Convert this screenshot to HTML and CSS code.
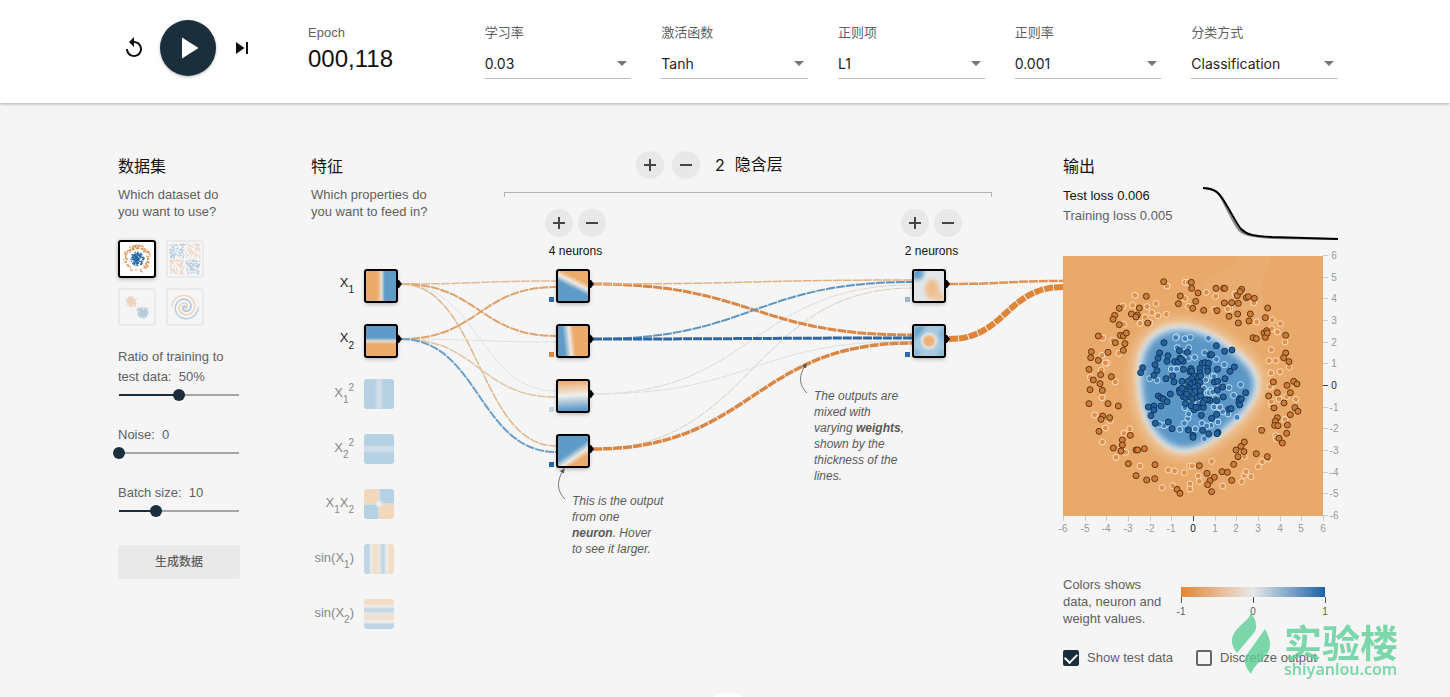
FILE: index.html
```
<!DOCTYPE html>
<html lang="zh-CN">
<head>
<meta charset="utf-8">
<title>Neural network playground</title>
<link rel="stylesheet" href="styles.css">
</head>
<body>
<header class="top">
  <div class="playback">
    <button class="icon-btn" aria-label="Reset"><svg width="24" height="24" viewBox="0 0 24 24"><path d="M12 5V1L7 6l5 5V7c3.31 0 6 2.69 6 6s-2.690 6-6 6-6-2.690-6-6H4c0 4.420 3.580 8 8 8s8-3.580 8-8-3.580-8-8-8z"/></svg></button>
    <button class="play" aria-label="Run"><svg width="36" height="36" viewBox="0 0 24 24"><path d="M8 5v14l11-7z"/></svg></button>
    <button class="icon-btn" aria-label="Step"><svg width="24" height="24" viewBox="0 0 24 24"><path d="M6 18l8.500-6L6 6v12zM16 6v12h2V6h-2z"/></svg></button>
  </div>
  <div class="field"><span class="label">Epoch</span><span class="epoch">000,118</span></div>
  <div class="field"><label class="label" for="rate">学习率</label><div class="select"><select id="rate"><option>0.03</option></select></div></div>
  <div class="field"><label class="label" for="act">激活函数</label><div class="select"><select id="act"><option>Tanh</option></select></div></div>
  <div class="field"><label class="label" for="reg">正则项</label><div class="select"><select id="reg"><option>L1</option></select></div></div>
  <div class="field"><label class="label" for="regrate">正则率</label><div class="select"><select id="regrate"><option>0.001</option></select></div></div>
  <div class="field"><label class="label" for="problem">分类方式</label><div class="select"><select id="problem"><option>Classification</option></select></div></div>
</header>

<main class="main">
  <section class="data">
    <h2>数据集</h2>
    <p class="lead">Which dataset do you want to use?</p>
    <div class="thumbs">
      <button class="thumb selected" aria-label="Circle"><svg viewBox="0 0 34 34" data-set="circle"></svg></button>
      <button class="thumb" aria-label="Exclusive or"><svg viewBox="0 0 34 34" data-set="xor"></svg></button>
      <button class="thumb" aria-label="Gaussian"><svg viewBox="0 0 34 34" data-set="gauss"></svg></button>
      <button class="thumb" aria-label="Spiral"><svg viewBox="0 0 34 34" data-set="spiral"></svg></button>
    </div>
    <div class="slider"><label for="ratio">Ratio of training to test data:&nbsp; 50%</label><input id="ratio" type="range" min="0" max="100" value="50" style="--v:.5"></div>
    <div class="slider"><label for="noise">Noise:&nbsp; 0</label><input id="noise" type="range" min="0" max="50" value="0" style="--v:0"></div>
    <div class="slider"><label for="batch">Batch size:&nbsp; 10</label><input id="batch" type="range" min="1" max="30" value="10" style="--v:.31"></div>
    <button class="regen">生成数据</button>
  </section>

  <section class="network">
    <div class="net-head">
      <div class="features">
        <h2>特征</h2>
        <p class="lead">Which properties do you want to feed in?</p>
      </div>
      <div class="layers">
        <div class="layer-count">
          <button class="round" aria-label="Add layer"><svg viewBox="0 0 28 28"><path d="M8 14h12M14 8v12"/></svg></button>
          <button class="round" aria-label="Remove layer"><svg viewBox="0 0 28 28"><path d="M8 14h12"/></svg></button>
          <span class="count">2</span><span>隐含层</span>
        </div>
        <div class="bracket"></div>
        <div class="columns">
          <div class="column">
            <div class="pair">
              <button class="round" aria-label="Add neuron"><svg viewBox="0 0 28 28"><path d="M8 14h12M14 8v12"/></svg></button>
              <button class="round" aria-label="Remove neuron"><svg viewBox="0 0 28 28"><path d="M8 14h12"/></svg></button>
            </div>
            <span>4 neurons</span>
          </div>
          <div class="column">
            <div class="pair">
              <button class="round" aria-label="Add neuron"><svg viewBox="0 0 28 28"><path d="M8 14h12M14 8v12"/></svg></button>
              <button class="round" aria-label="Remove neuron"><svg viewBox="0 0 28 28"><path d="M8 14h12"/></svg></button>
            </div>
            <span>2 neurons</span>
          </div>
        </div>
      </div>
    </div>
    <svg class="diagram" viewBox="311 262 752 380">
      <defs>
        <linearGradient id="gx1"><stop offset=".38" stop-color="#ecaa6b"/><stop offset=".52" stop-color="#e4ddd3"/><stop offset=".62" stop-color="#5f9bc8"/></linearGradient>
        <linearGradient id="gx2" x2="0" y2="1"><stop offset=".4" stop-color="#5f9bc8"/><stop offset=".5" stop-color="#e4ddd3"/><stop offset=".6" stop-color="#ecaa6b"/></linearGradient>
        <linearGradient id="gn1" x1=".7" y1="0" x2=".3" y2=".8"><stop offset=".3" stop-color="#ecaa6b"/><stop offset=".48" stop-color="#eee9e2"/><stop offset=".68" stop-color="#5f9bc8"/></linearGradient>
        <linearGradient id="gn2" x1="0" y1=".1" x2="1" y2="0"><stop offset=".16" stop-color="#5f9bc8"/><stop offset=".36" stop-color="#eee9e2"/><stop offset=".5" stop-color="#ecaa6b"/></linearGradient>
        <linearGradient id="gn3" x2=".05" y2="1"><stop offset=".05" stop-color="#ecaa6b"/><stop offset=".5" stop-color="#f0eeea"/><stop offset=".95" stop-color="#5f9bc8"/></linearGradient>
        <linearGradient id="gn4" x1=".25" y1=".2" x2=".8" y2="1"><stop offset=".38" stop-color="#5f9bc8"/><stop offset=".6" stop-color="#eee9e2"/><stop offset=".76" stop-color="#ecaa6b"/></linearGradient>
        <linearGradient id="sq1"><stop offset=".35" stop-color="#b6d0e4"/><stop offset=".45" stop-color="#d0e0ea"/><stop offset=".55" stop-color="#d0e0ea"/><stop offset=".65" stop-color="#b6d0e4"/></linearGradient>
        <linearGradient id="sq2" x2="0" y2="1"><stop offset=".35" stop-color="#b6d0e4"/><stop offset=".45" stop-color="#d0e0ea"/><stop offset=".55" stop-color="#d0e0ea"/><stop offset=".65" stop-color="#b6d0e4"/></linearGradient>
        <linearGradient id="sin1"><stop offset=".15" stop-color="#bfd5e5"/><stop offset=".24" stop-color="#eeeeec"/><stop offset=".33" stop-color="#f3dcc4"/><stop offset=".43" stop-color="#f3dfca"/><stop offset=".5" stop-color="#e8e8e6"/><stop offset=".64" stop-color="#bcd3e5"/><stop offset=".76" stop-color="#eeeeec"/><stop offset=".85" stop-color="#f3dcc4"/></linearGradient>
        <linearGradient id="sin2" x2="0" y2="1"><stop offset=".15" stop-color="#f3dcc4"/><stop offset=".24" stop-color="#eeeeec"/><stop offset=".36" stop-color="#bcd3e5"/><stop offset=".5" stop-color="#e8e8e6"/><stop offset=".62" stop-color="#f3dcc4"/><stop offset=".76" stop-color="#eeeeec"/><stop offset=".85" stop-color="#bfd5e5"/></linearGradient>
        <filter id="soft" x="-50%" y="-50%" width="200%" height="200%"><feGaussianBlur stdDeviation="2"/></filter>
        <filter id="soft1"><feGaussianBlur stdDeviation="1"/></filter>
        <clipPath id="c30"><rect x="-15" y="-15" width="30" height="30" rx="3"/></clipPath>
        <marker id="tip" viewBox="0 0 10 10" refX="8" refY="5" markerWidth="5" markerHeight="5" markerUnits="userSpaceOnUse" orient="auto"><path d="M0 0L10 5L0 10z" fill="#555"/></marker>
      </defs>

      <g class="links">
        <path d="M401 284C479 284 479 391 556 391" stroke="#dfe1e5"/>
        <path d="M401 339C479 339 479 342 556 342" stroke="#dedede"/>
        <path d="M401 284C479 284 479 281 556 281" stroke="#dfbb98" stroke-width="1.500"/>
        <path d="M401 284C479 284 479 336 556 336" stroke="#dfa26c" stroke-width="2"/>
        <path d="M401 284C479 284 479 446 556 446" stroke="#e0b68c" stroke-width="1.500"/>
        <path d="M401 339C479 339 479 287 556 287" stroke="#dfa26c" stroke-width="2"/>
        <path d="M401 339C479 339 479 397 556 397" stroke="#e0c3a4" stroke-width="1.500"/>
        <path d="M401 339C479 339 479 452 556 452" stroke="#6a9fc8" stroke-width="2"/>
        <path d="M593 394C753 394 753 285 912 285" stroke="#e0d8d1"/>
        <path d="M593 394C753 394 753 341 912 341" stroke="#dadfe4"/>
        <path d="M593 449C753 449 753 288 912 288" stroke="#ddcdbf" stroke-width="1"/>
        <path d="M593 284C753 284 753 335 912 335" stroke="#d98746" stroke-width="3"/>
        <path d="M593 284C753 284 753 280 912 280" stroke="#e0b385" stroke-width="1.500"/>
        <path d="M593 339C753 339 753 282 912 282" stroke="#5e94bf" stroke-width="2"/>
        <path d="M593 339C753 339 753 338 912 338" stroke="#2f67a2" stroke-width="3"/>
        <path d="M593 449C753 449 753 343 912 343" stroke="#d98746" stroke-width="3.500"/>
        <path d="M949 284C1006 284 1006 281 1063 281" stroke="#dc9353" stroke-width="2.500"/>
        <path d="M949 339C1006 339 1006 287 1063 287" stroke="#e08438" stroke-width="6"/>
      </g>

      <g class="off">
        <rect x="364" y="379" width="30" height="30" rx="3" fill="url(#sq1)"/>
        <rect x="364" y="434" width="30" height="30" rx="3" fill="url(#sq2)"/>
        <g transform="translate(379 504)"><g clip-path="url(#c30)"><path d="M-15-15H0V0H-15z" fill="#f3d7ba"/><path d="M0-15H15V0H0z" fill="#b6d0e4"/><path d="M-15 0H0V15H-15z" fill="#b6d0e4"/><path d="M0 0H15V15H0z" fill="#f3d7ba"/><path d="M0-15V15M-15 0H15" stroke="#e0e0de" stroke-width="1.500"/><circle r="3" fill="#edf0f0" filter="url(#soft1)"/></g></g>
        <rect x="364" y="544" width="30" height="30" rx="3" fill="url(#sin1)"/>
        <rect x="364" y="599" width="30" height="30" rx="3" fill="url(#sin2)"/>
      </g>

      <g class="nodes">
        <rect x="365" y="270" width="32" height="32" rx="2" fill="url(#gx1)"/>
        <rect x="365" y="325" width="32" height="32" rx="2" fill="url(#gx2)"/>
        <rect x="557" y="270" width="32" height="32" rx="2" fill="url(#gn1)"/>
        <rect x="557" y="325" width="32" height="32" rx="2" fill="url(#gn2)"/>
        <rect x="557" y="380" width="32" height="32" rx="2" fill="url(#gn3)"/>
        <rect x="557" y="435" width="32" height="32" rx="2" fill="url(#gn4)"/>
        <rect x="913" y="270" width="32" height="32" rx="2" fill="#e3e7ea"/>
        <rect x="913" y="325" width="32" height="32" rx="2" fill="#a9cae0"/>
      </g>
      <g transform="translate(929 286)"><g clip-path="url(#c30)"><circle cx="-12" cy="-13" r="7" fill="#5f9bc8" filter="url(#soft)"/><ellipse cx="3" cy="3" rx="7" ry="10" fill="#efbd8c" filter="url(#soft)"/><path d="M2 4L15 8V15H6z" fill="#efc59b" filter="url(#soft)"/></g></g>
      <g transform="translate(929 341)"><g clip-path="url(#c30)"><path d="M-15-15H-3L-15 0zM15-15V4L11-8z" fill="#5f9bc8" filter="url(#soft)"/><path d="M8 15L15 7V15zM-15 15V6L-8 15z" fill="#6fa5cd" filter="url(#soft)"/><circle r="8" fill="#eef0f0" filter="url(#soft1)"/><circle r="6" fill="#edb077" filter="url(#soft1)"/></g></g>
      <g class="frames">
        <rect x="365" y="270" width="32" height="32" rx="2"/><rect x="365" y="325" width="32" height="32" rx="2"/>
        <rect x="557" y="270" width="32" height="32" rx="2"/><rect x="557" y="325" width="32" height="32" rx="2"/><rect x="557" y="380" width="32" height="32" rx="2"/><rect x="557" y="435" width="32" height="32" rx="2"/>
        <rect x="913" y="270" width="32" height="32" rx="2"/><rect x="913" y="325" width="32" height="32" rx="2"/>
      </g>
      <path class="ports" d="M398 280h1l3 4-3 4h-1zM398 335h1l3 4-3 4h-1zM590 280h1l3 4-3 4h-1zM590 335h1l3 4-3 4h-1zM590 390h1l3 4-3 4h-1zM590 445h1l3 4-3 4h-1zM946 280h1l3 4-3 4h-1zM946 335h1l3 4-3 4h-1z"/>
      <g class="biases">
        <rect x="549" y="297" width="5" height="5" fill="#2f6ba6"/><rect x="549" y="352" width="5" height="5" fill="#db8746"/><rect x="549" y="407" width="5" height="5" fill="#c8d5de"/><rect x="549" y="462" width="5" height="5" fill="#2465a5"/>
        <rect x="905" y="297" width="5" height="5" fill="#9ab7cf"/><rect x="905" y="352" width="5" height="5" fill="#2f6ba6"/>
      </g>

      <g class="names">
        <text class="on" x="354" y="287">X<tspan class="small" dy="6">1</tspan></text>
        <text class="on" x="354" y="342">X<tspan class="small" dy="7">2</tspan></text>
        <text x="354" y="397">X<tspan class="small" dy="6">1</tspan><tspan class="small" dy="-12">2</tspan></text>
        <text x="354" y="452">X<tspan class="small" dy="6">2</tspan><tspan class="small" dy="-12">2</tspan></text>
        <text x="354" y="507">X<tspan class="small" dy="6">1</tspan><tspan dy="-6">X</tspan><tspan class="small" dy="6">2</tspan></text>
        <text x="354" y="562">sin(X<tspan class="small" dy="6">1</tspan><tspan dy="-6">)</tspan></text>
        <text x="354" y="617">sin(X<tspan class="small" dy="6">2</tspan><tspan dy="-6">)</tspan></text>
      </g>
      <g class="notes">
        <path d="M565 499C556 490 557 480 564 469" marker-end="url(#tip)"/>
        <path d="M807 393C798 384 799 375 806 364" marker-end="url(#tip)"/>
        <text><tspan x="572" y="505">This is the output</tspan><tspan x="572" y="521">from one</tspan><tspan x="572" y="537" class="strong">neuron</tspan>. Hover<tspan x="572" y="553">to see it larger.</tspan></text>
        <text><tspan x="814" y="400">The outputs are</tspan><tspan x="814" y="416">mixed with</tspan><tspan x="814" y="432">varying </tspan><tspan class="strong">weights</tspan>,<tspan x="814" y="448">shown by the</tspan><tspan x="814" y="464">thickness of the</tspan><tspan x="814" y="480">lines.</tspan></text>
      </g>
    </svg>
  </section>

  <section class="output">
    <h2>输出</h2>
    <div class="stats">
      <div class="losses"><span class="test">Test loss 0.006</span><span>Training loss 0.005</span></div>
      <svg class="losschart" width="136" height="60" viewBox="0 0 136 60"><path class="train" d="M1 7C14 7 17 12 22 22C29 36 33 44 37 49C43 55 54 56 70 57L136 58"/><path d="M1 7C14 8 17 12 22 20C32 36 34 42 39 48C45 54 52 55 70 56L136 58"/></svg>
    </div>
    <svg class="heatmap" viewBox="1063 250 275 290">
      <defs>
        <filter id="b1" x="-20%" y="-20%" width="140%" height="140%"><feGaussianBlur stdDeviation="18"/></filter>
        <filter id="b2" x="-20%" y="-20%" width="140%" height="140%"><feGaussianBlur stdDeviation="8"/></filter>
        <filter id="b3" x="-20%" y="-20%" width="140%" height="140%"><feGaussianBlur stdDeviation="11"/></filter>
        <clipPath id="plot"><rect x="24" y="18" width="780" height="780"/></clipPath>
      </defs>
      <g transform="translate(1055 250) scale(.33333)">
        <rect x="24" y="18" width="780" height="780" fill="#e8a96a"/>
        <path d="M430 100L535 50L560 18H650L622 100L624 220z" fill="#eab078" opacity=".6"/>
        <g clip-path="url(#plot)">
          <path d="M375 225C440 225 500 262 545 300C590 335 612 370 612 400C612 450 570 500 520 540C470 580 430 608 385 608C320 605 280 545 262 490C248 440 243 390 250 330C262 265 310 225 375 225Z" fill="#efcaa3" stroke="#efcaa3" stroke-width="36" filter="url(#b1)"/>
          <path d="M375 225C440 225 500 262 545 300C590 335 612 370 612 400C612 450 570 500 520 540C470 580 430 608 385 608C320 605 280 545 262 490C248 440 243 390 250 330C262 265 310 225 375 225Z" fill="#eef0f0" filter="url(#b2)"/>
          <path d="M375 240C437 240 492 274 534 308C576 342 598 373 598 400C598 447 560 492 512 530C467 567 428 594 385 594C327 590 290 538 274 486C260 438 256 390 263 333C274 274 316 240 375 240Z" fill="#5a96c6" filter="url(#b3)"/>
        </g>
        <g id="points"></g>
      </g>
      <g id="axes"></g>
    </svg>
    <div class="legend">
      <p class="lead">Colors shows data, neuron and weight values.</p>
      <div class="scale">
        <div class="bar"></div>
        <div class="ticks"><span>-1</span><span>0</span><span>1</span></div>
      </div>
    </div>
    <div class="checks">
      <label><input type="checkbox" checked>Show test data</label>
      <label><input type="checkbox">Discretize output</label>
    </div>
  </section>

  <div class="brand">
    <svg width="40" height="62" viewBox="0 0 40 62"><path d="M20 0C26 8 27 15 22 21L6 40C-2 30 0 22 8 14C13 9 18 6 20 0Z"/><path d="M34 16C42 30 40 38 32 46C26 51 22 55 20 61C13 53 12 46 17 40Z"/></svg>
    <div class="brand-text"><span class="brand-name">实验楼</span><span class="brand-url">shiyanlou.com</span></div>
  </div>
  <div class="more"></div>
</main>
<script src="script.js"></script>
</body>
</html>
```

FILE: styles.css
```
* { box-sizing: border-box; }
body {
  margin: 0;
  min-height: 100vh;
  display: flex;
  flex-direction: column;
  background: #f5f5f5;
  color: #5f5f5f;
  font: 13px/17px "Liberation Sans", "Noto Sans CJK SC", sans-serif;
}
button { padding: 0; border: 0; background: none; font: inherit; color: inherit; cursor: pointer; }
h2, p { margin: 0; }
h2 { font-size: 16px; line-height: 20px; font-weight: 400; color: #111; }
svg { display: block; }

.top {
  display: grid;
  grid-template-columns: 160px repeat(6, 1fr);
  column-gap: 30px;
  height: 103px;
  padding: 20px 112px 0 118px;
  background: #fff;
  box-shadow: 0 1px 3px rgba(0, 0, 0, .3);
  position: relative;
}
.playback { display: flex; gap: 14px; height: 56px; align-items: center; padding-left: 4px; }
.icon-btn svg { fill: #111; }
.play {
  width: 56px; height: 56px; border-radius: 50%;
  display: grid; place-items: center;
  background: #1a2f3b;
  box-shadow: 0 1px 3px rgba(0, 0, 0, .3);
}
.play svg { fill: #fff; }
.field { display: flex; flex-direction: column; padding-top: 4px; }
.label { line-height: 17px; }
.epoch { font-size: 24px; line-height: 30px; margin-top: 3px; color: #111; }
.select { display: grid; align-items: center; margin-top: 8px; border-bottom: 1px solid #bbb; }
.select::after {
  content: ""; grid-area: 1 / 1; justify-self: end;
  margin-right: 4px;
  border: 5px solid transparent; border-top-color: #777; border-bottom: 0;
}
select {
  grid-area: 1 / 1;
  width: 100%; height: 29px; padding: 0;
  appearance: none; border: 0; background: none;
  font: 14px Inter, sans-serif; color: #222;
}

.main {
  flex: 1;
  position: relative;
  overflow: hidden;
  display: grid;
  grid-template-columns: 122px 1fr 275px;
  padding: 54px 112px 0 118px;
}
.lead { margin-top: 9px; }
.data .lead { width: 110px; }
.thumbs { display: grid; grid-template-columns: 38px 38px; gap: 10px; margin: 20px 0 21px; }
.thumb { height: 38px; border: 2px solid #eaeaea; border-radius: 3px; }
.thumb svg { opacity: .3; }
.thumb.selected { border-color: #000; background: #fff; box-shadow: 0 1px 4px rgba(0, 0, 0, .3); }
.thumb.selected svg { opacity: 1; }
.slider { line-height: 20px; margin-bottom: 22px; }
.slider label { display: block; }
input[type=range] {
  display: block;
  appearance: none;
  width: calc(100% + 10px);
  height: 16px;
  margin: 0 -5px;
  background: none;
}
input[type=range]::-webkit-slider-runnable-track {
  height: 2px;
  background: linear-gradient(90deg, transparent 6px, #1a2f3b 6px calc(6px + (100% - 12px) * var(--v)), #a5a5a5 0 calc(100% - 6px), transparent 0);
}
input[type=range]::-webkit-slider-thumb {
  appearance: none;
  width: 12px; height: 12px; margin-top: -5px;
  border-radius: 50%;
  background: #1a2f3b;
}
.regen { width: 100%; height: 34px; margin-top: 4px; border-radius: 3px; background: #e9e9e9; font-size: 12px; font-weight: 500; }

.network { padding-left: 71px; }
.net-head { display: grid; grid-template-columns: 193px 1fr; height: 105px; }
.features .lead { width: 130px; }
.layers { margin-right: 71px; margin-top: -6px; color: #111; }
.layer-count { display: flex; align-items: center; padding-left: 132px; gap: 8px; font-size: 16px; line-height: 28px; }
.count { margin-left: 7px; font-family: Inter, sans-serif; }
.count + span { margin-left: 2px; }
.round { width: 28px; height: 28px; border-radius: 50%; background: #e8e8e8; }
.round path { stroke: #444; stroke-width: 2; }
.bracket { height: 5px; margin-top: 13px; border: 1px solid #b5b5b5; border-bottom: 0; }
.columns { display: flex; justify-content: space-between; padding: 12px 30px 0 41px; font-size: 12px; }
.column { display: flex; flex-direction: column; align-items: center; gap: 6px; }
.pair { display: flex; gap: 5px; }

.diagram { width: 100%; overflow: visible; }
.links path { fill: none; stroke-dasharray: 9 1; }
.frames rect { fill: none; stroke: #000; stroke-width: 2; }
.nodes rect { filter: drop-shadow(0 2px 2px rgba(0, 0, 0, .3)); }
.names text { text-anchor: end; font-size: 13px; fill: #888; }
.names .on { fill: #222; }
.names .small { font-size: 10px; }
.notes path { fill: none; stroke: #777; }
.notes marker path { stroke: none; }
.notes text { font-size: 12px; font-style: italic; fill: #5a5a5a; }
.notes .strong { font-weight: 700; }

.stats { display: flex; justify-content: space-between; }
.losses { display: flex; flex-direction: column; line-height: 20px; padding-top: 9px; }
.losses .test { color: #111; }
.losschart { fill: none; stroke: #000; stroke-width: 2; margin-top: 4px; }
.losschart .train { stroke: #888; }
.heatmap { width: 100%; margin-top: 9px; overflow: visible; }
#axes text { font-size: 10px; fill: #999; text-anchor: middle; }
#axes path { stroke: #ccc; }
#axes text.zero { fill: #222; }
#axes path.zero { stroke: #444; }
.legend { display: flex; justify-content: space-between; margin-top: 36px; }
.legend .lead { margin: 0; width: 105px; }
.scale { width: 144px; margin: 11px 13px 0 0; }
.bar { height: 10px; background: linear-gradient(90deg, #e58634, #e8e8e8 50%, #1b63a8); }
.ticks { display: flex; justify-content: space-between; margin: 0 -8px; font-size: 10px; line-height: 12px; }
.ticks span { width: 16px; text-align: center; }
.ticks span::before { content: ""; display: block; width: 1px; height: 6px; margin: 0 auto 3px; background: #555; }
.checks { display: flex; gap: 23px; margin-top: 22px; }
.checks label { display: flex; align-items: center; gap: 8px; white-space: nowrap; }
input[type=checkbox] {
  appearance: none;
  display: grid; place-items: center;
  width: 16px; height: 16px; margin: 0;
  border: 2px solid #666; border-radius: 2px;
}
input[type=checkbox]:checked { background: #1a2f3b; border-color: #1a2f3b; }
input[type=checkbox]:checked::after {
  content: "";
  width: 10px; height: 6px;
  border: solid #fff; border-width: 0 0 2px 2px;
  transform: translateY(-1px) rotate(-45deg);
}

.brand { position: absolute; right: 52px; top: 510px; display: flex; gap: 13px; color: #5dd098; opacity: .8; pointer-events: none; }
.brand svg { fill: currentColor; }
.brand-text { display: flex; flex-direction: column; padding-top: 9px; }
.brand-name { font: 700 38px/38px "Noto Sans CJK SC", sans-serif; }
.brand-url { font: 600 16px/18px "Noto Sans", sans-serif; }
.more { position: absolute; left: calc(50% - 27px); top: 590px; width: 60px; height: 60px; border-radius: 50%; background: #fff; }
```

FILE: script.js
```
const NS = "http://www.w3.org/2000/svg";
function add(parent, tag, attrs, text) {
  const el = document.createElementNS(NS, tag);
  for (const k in attrs) el.setAttribute(k, attrs[k]);
  if (text !== undefined) el.textContent = text;
  parent.appendChild(el);
}

const outerTrain = "336,108 390,97 400,97 454,127 482,139 390,146 400,169 478,178 525,175 518,177 540,132 596,159 605,216 652,210 676,221 650,236 667,246 690,276 649,299 642,332 662,332 703,352 675,365 648,369 649,406 645,410 240,136 233,166 204,168 276,170 303,161 291,188 309,197 334,193 270,202 255,220 285,218 206,223 143,264 173,271 192,310 141,316 157,339 151,339 139,360 106,382 181,396 141,443 119,495 166,512 151,534 142,576 207,550 224,537 183,622 212,607 255,648 340,660 359,663 388,668 404,648 412,648 470,634 430,678 433,694 321,713 353,707 405,702 405,717 503,708 560,695 588,680 568,676 573,665 610,650 622,635 640,627 568,620 616,537 650,465 672,447 695,440 723,448 649,455 690,508 662,557 664,566";
const outerTest = "326,95 409,97 410,115 376,138 370,161 429,129 422,154 413,175 446,181 486,182 483,115 506,115 509,115 508,159 530,158 550,160 548,192 522,199 550,219 547,137 560,118 555,125 574,143 580,140 598,145 586,192 582,213 638,174 631,203 692,256 594,263 604,266 627,249 635,242 631,262 637,249 274,139 253,174 229,192 247,195 243,201 193,175 179,196 174,208 193,224 278,219 130,258 196,256 205,258 214,249 210,281 181,278 205,301 159,307 109,305 107,323 130,331 102,358 137,374 115,390 135,401 105,419 142,421 169,380 102,461 159,461 190,468 143,498 138,508 164,503 132,544 226,556 202,570 202,585 175,594 198,603 243,600 248,600 268,596 220,641 243,677 300,644 299,686 275,690 366,718 375,730 433,647 456,670 478,682 465,692 458,704 470,725 501,665 517,667 530,691 536,643 549,620 543,600 558,589 568,576 567,605 604,611 637,620 620,541 692,309 686,323 702,335 655,396 716,394 726,402 696,406 706,428 667,428 641,438 657,474 687,459 720,473 729,484 706,494 667,503 661,514 659,526 669,527 697,525 695,550 672,565 682,579";
const innerTrain = "170,50 167,53 195,56 211,52 265,55 172,83 206,83 192,97 224,112 254,98 289,118 313,134 154,147 170,147 205,115 257,180 276,168 282,170 362,194 327,203 341,226 300,200 272,210 262,219 268,218 252,205 278,216 286,234 89,176 111,181 293,263 282,261 308,275 324,282 351,292 294,306 246,310 273,316 260,318 253,356 226,327 193,310 179,328 139,314 132,317 118,313 204,295 206,282 195,263 235,250 300,262";
const innerTest = "132,68 119,99 114,115 105,134 111,152 102,166 68,143 62,158 144,107 141,124 178,92 202,97 164,125 175,125 180,114 190,124 184,118 138,176 158,168 162,186 190,148 186,184 151,222 115,228 123,234 130,237 141,245 123,258 85,261 102,258 102,270 93,287 106,310 145,306 156,326 205,330 219,346 219,352 248,331 266,342 294,337 291,341 275,295 290,283 326,268 333,266 358,236 357,247 359,255 364,237 377,218 315,176 330,154 343,141 336,90 314,94 289,77 270,104 275,104 292,148 283,186 293,184 292,210 308,201 310,231 290,242 270,241 262,239 255,240 250,262 235,262 244,286 222,269 213,257 196,251 213,146 210,155 215,153 240,145 247,130 255,128 265,130 263,146 263,154 240,158 242,168 222,168 215,176 205,184 219,190 214,192 225,187 235,185 240,187 233,198 205,202 210,207 224,202 226,214 208,215 185,212 178,210 180,218 190,230 197,232 210,230 218,236 231,232 241,212 241,228 200,222 249,248 228,262 186,205";

const points = document.getElementById("points");
function plot(list, dx, dy, fill, stroke) {
  list.split(" ").forEach(p => {
    const [x, y] = p.split(",").map(Number);
    add(points, "circle", { cx: x + dx, cy: y + dy, r: 9, fill, stroke, "stroke-width": 3 });
  });
}
plot(outerTrain, 0, 0, "#e0924c", "#fbdfc0");
plot(innerTrain, 195, 210, "#3f80ba", "#c4e0f4");
plot(outerTest, 0, 0, "#cd7c39", "#60350f");
plot(innerTest, 195, 210, "#25629d", "#0e365c");

const axes = document.getElementById("axes");
for (let v = -6; v <= 6; v++) {
  const cls = v === 0 ? "zero" : "";
  const x = Math.round(1193 + v * 21.67), y = Math.round(386 - v * 21.67);
  add(axes, "path", { d: `M${x}.5 516v5`, class: cls });
  add(axes, "text", { x, y: 532, class: cls }, v);
  add(axes, "path", { d: `M1323 ${y - 0.5}h5`, class: cls });
  add(axes, "text", { x: 1334, y: y + 3, class: cls }, v);
}

let seed = 7;
const rnd = () => (seed = (seed * 16807) % 2147483647) / 2147483647;
const gauss = () => rnd() + rnd() + rnd() - 1.5;
const ORANGE = "#d98a45", BLUE = "#2a6aa6";
function dot(svg, x, y, fill) {
  add(svg, "rect", { x: x - 0.6, y: y - 0.6, width: 1.3, height: 1.3, fill });
}
document.querySelectorAll("[data-set]").forEach(svg => {
  const kind = svg.dataset.set;
  for (let i = 0; i < 150; i++) {
    if (kind === "circle") {
      const a = rnd() * 6.283, r = 10 + rnd() * 4, b = rnd() * 6.283, s = rnd() * 7;
      if (i % 3) dot(svg, 17 + r * Math.cos(a), 17 + r * Math.sin(a), ORANGE);
      dot(svg, 17 + s * Math.cos(b), 17 + s * Math.sin(b), BLUE);
    } else if (kind === "xor") {
      for (let k = 0; k < 2; k++) {
        const x = rnd() * 28 - 14, y = rnd() * 28 - 14;
        dot(svg, 17 + x + Math.sign(x), 17 + y + Math.sign(y), x * y > 0 ? BLUE : ORANGE);
      }
    } else if (kind === "gauss") {
      dot(svg, 11.5 + gauss() * 4.5, 11.5 + gauss() * 4.5, ORANGE);
      dot(svg, 22.5 + gauss() * 4.5, 22.5 + gauss() * 4.5, BLUE);
    } else {
      const t = i / 150, r = t * 13.5, a = t * 11;
      dot(svg, 17 + r * Math.sin(a), 17 + r * Math.cos(a), ORANGE);
      dot(svg, 17 - r * Math.sin(a), 17 - r * Math.cos(a), BLUE);
    }
  }
});
```
